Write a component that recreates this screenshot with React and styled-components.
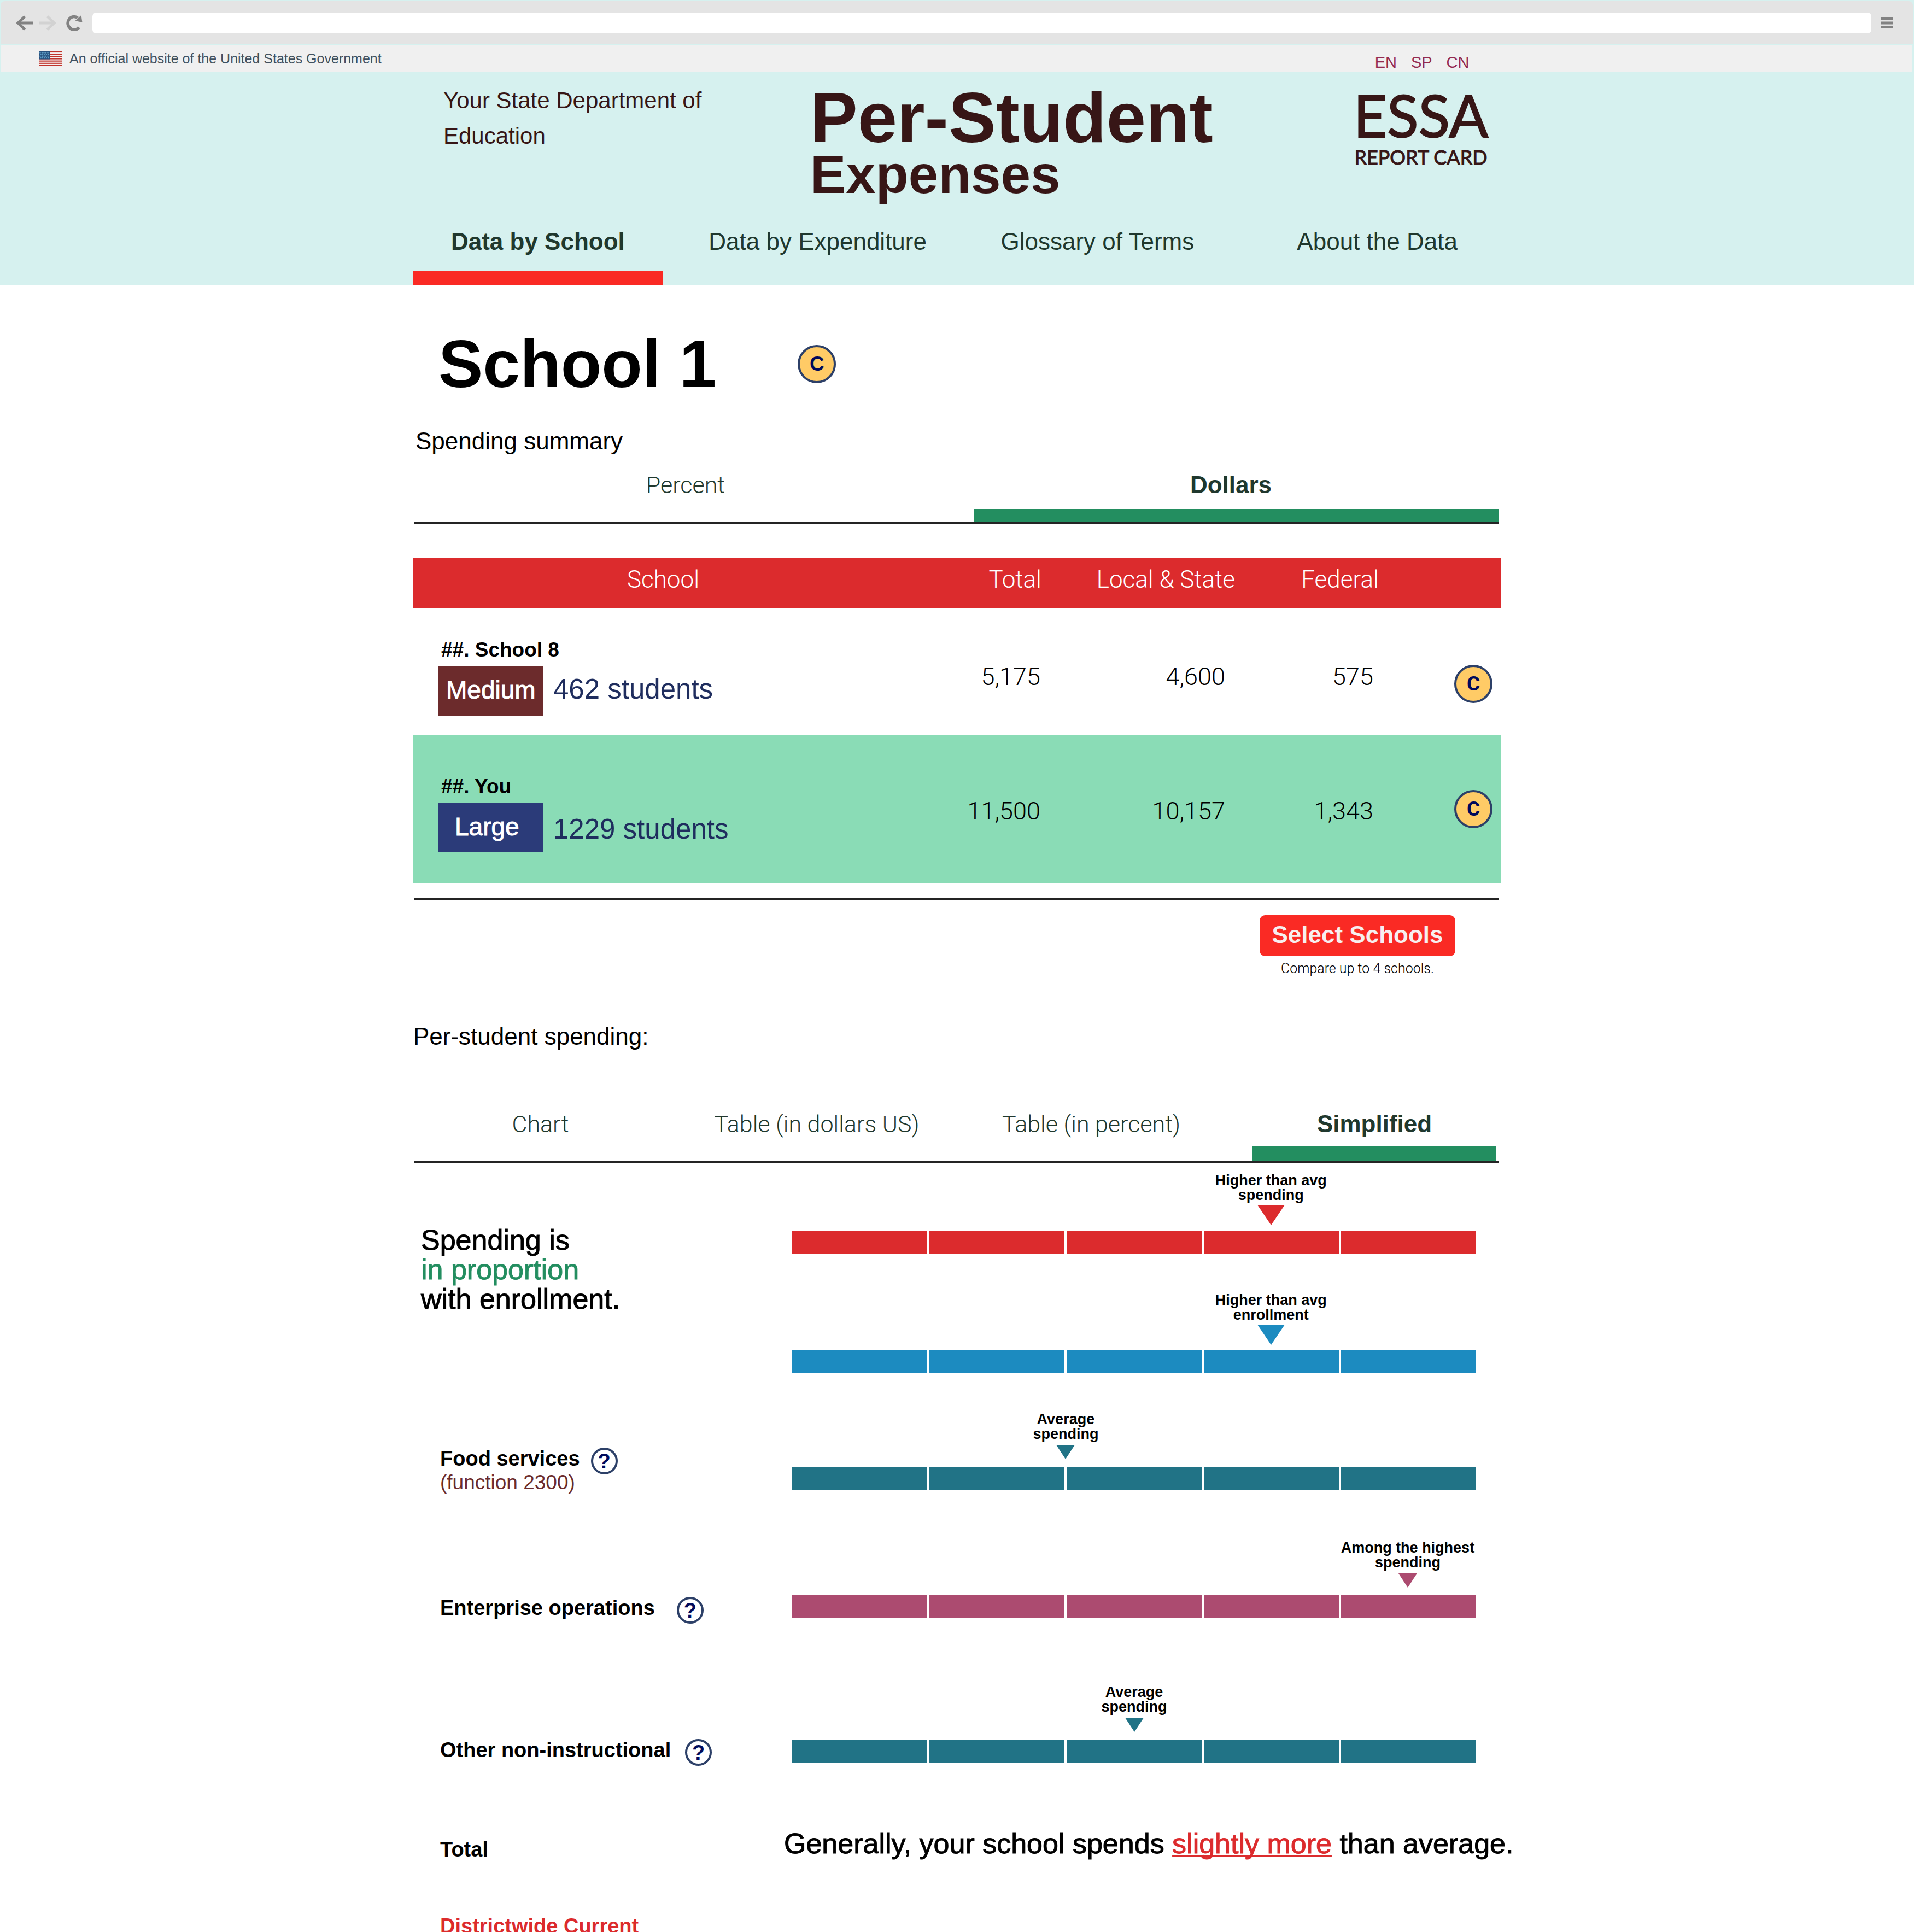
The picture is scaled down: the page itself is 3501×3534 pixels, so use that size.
import React from "react";
import styled, { createGlobalStyle } from "styled-components";

const color = {
  mint: "#d6f1ef",
  maroon: "#371616",
  forest: "#20382e",
  scarlet: "#fa2a24",
  red: "#dc2b2d",
  green: "#238e60",
  ink: "#242424",
  navy: "#2d4068",
  deepNavy: "#000a5c",
  blue: "#1c8bc0",
  teal: "#217386",
  plum: "#ac4b70",
};

const sans = `"Liberation Sans", Arial, Helvetica, sans-serif`;
const light = `Roboto, "Liberation Sans", sans-serif`;

const GlobalStyle = createGlobalStyle`
  *, *::before, *::after { box-sizing: border-box; }
  body { margin: 0; background: #fff; font-family: ${sans}; color: #000; }
  button, input { font: inherit; color: inherit; margin: 0; padding: 0; border: 0; background: none; }
  button { cursor: pointer; }
  a { color: inherit; text-decoration: none; }
  h1, h2, p { margin: 0; font-weight: 400; }
`;

const Page = styled.div`
  height: 100vh;
  overflow: hidden;
`;

const Container = styled.div`
  width: 100%;
  max-width: 1989px;
  margin: 0 auto;
`;

/* ---------- browser bar ---------- */

const Chrome = styled.div`
  padding: 2px 2px 2px 1px;
  background: ${color.mint};
`;

const ChromeBar = styled.div`
  display: flex;
  align-items: center;
  gap: 10px;
  height: 79px;
  padding: 0 37px 0 28px;
  border-radius: 8px 8px 0 0;
  background: #e4e4e4;
`;

const ChromeButton = styled.button`
  display: flex;
  color: ${(p) => (p.$muted ? "#d2d2d2" : "#828282")};
`;

const ReloadButton = styled(ChromeButton)`
  margin: 0 8px;
`;

const AddressField = styled.input`
  flex: 1;
  height: 38px;
  margin-right: 8px;
  padding: 0 16px;
  border-radius: 7px;
  background: #fff;
  font-size: 24px;
`;

/* ---------- government banner ---------- */

const Banner = styled.div`
  display: flex;
  align-items: center;
  height: 48px;
  margin: 0 3px 0 1px;
  padding-left: 70px;
  background: #f0f0f0;
`;

const BannerShell = styled.div`
  background: ${color.mint};
`;

const BannerText = styled.p`
  margin-left: 14px;
  font-size: 25px;
  line-height: 32px;
  color: #40505f;
`;

const Languages = styled.nav`
  display: flex;
  align-self: flex-end;
  gap: 26px;
  margin-left: auto;
  margin-right: calc(50vw - 940px);
  font-size: 29px;
  line-height: 34px;
  color: #942a50;
`;

/* ---------- header ---------- */

const Header = styled.header`
  padding-top: 20px;
  background: ${color.mint};
`;

const Masthead = styled(Container)`
  display: grid;
  grid-template-columns: 724fr 999fr 266fr;
  align-items: start;
  color: ${color.maroon};
`;

const Department = styled.p`
  max-width: 600px;
  padding-left: 55px;
  font-size: 42px;
  line-height: 65px;
`;

const SiteTitle = styled.p`
  display: flex;
  flex-direction: column;
  padding: 9px 0 0 2px;
  font-weight: 700;
`;

const TitleMain = styled.span`
  font-size: 130px;
  line-height: 110px;
`;

const TitleSub = styled.span`
  font-size: 98px;
  line-height: 98px;
`;

const Logo = styled.a`
  display: flex;
  flex-direction: column;
  align-items: center;
  gap: 10px;
  width: 240px;
  padding-top: 14px;
  font-family: Lato, "Open Sans", sans-serif;
`;

const LogoName = styled.span`
  font-size: 106px;
  line-height: 90px;
  -webkit-text-stroke: 2px currentColor;
`;

const LogoTag = styled.span`
  font-size: 36px;
  line-height: 44px;
  white-space: nowrap;
  -webkit-text-stroke: 1px currentColor;
`;

const MainNav = styled(Container).attrs({ as: "nav" })`
  display: grid;
  grid-template-columns: repeat(4, 1fr);
  gap: 56px;
  max-width: 1993px;
  padding: 46px 0 0 2px;
`;

const NavLink = styled.a`
  padding-bottom: 25px;
  border-bottom: 26px solid ${(p) => (p.$active ? color.scarlet : "transparent")};
  font-size: 44px;
  font-weight: ${(p) => (p.$active ? 700 : 400)};
  line-height: 56px;
  text-align: center;
  color: ${color.forest};
`;

/* ---------- shared pieces ---------- */

const Badge = styled.button`
  flex: none;
  width: 70px;
  height: 70px;
  border: 4px solid ${color.navy};
  border-radius: 50%;
  background: #ffcb66;
  font-size: 37px;
  font-weight: 700;
  line-height: 60px;
  text-align: center;
  color: ${color.deepNavy};
`;

const HelpButton = styled.button`
  flex: none;
  width: 49px;
  height: 49px;
  margin-top: 2px;
  border: 4px solid ${color.navy};
  border-radius: 50%;
  font-size: 38px;
  font-weight: 700;
  line-height: 40px;
  text-align: center;
  color: ${color.deepNavy};
`;

const Tabs = styled.div`
  display: grid;
  grid-template-columns: ${(p) => p.$columns};
  gap: ${(p) => p.$gap}px;
  margin-top: ${(p) => p.$space}px;
  padding-right: ${(p) => p.$end}px;
`;

const Tab = styled.button`
  padding: 0 ${(p) => p.$trim || 0}px ${(p) => 40 - p.$bar}px 0;
  border-bottom: ${(p) => p.$bar}px solid ${(p) => (p["aria-selected"] ? color.green : "transparent")};
  font-family: ${(p) => (p["aria-selected"] ? sans : light)};
  font-size: ${(p) => (p["aria-selected"] ? 44 : 43)}px;
  font-weight: ${(p) => (p["aria-selected"] ? 700 : 300)};
  line-height: 56px;
  text-align: center;
  white-space: nowrap;
  color: ${color.forest};
`;

const Rule = styled.hr`
  height: 4px;
  margin: ${(p) => p.$space || 0}px 4px 0 1px;
  border: 0;
  background: ${color.ink};
`;

const SectionTitle = styled.h2`
  margin-top: ${(p) => p.$space}px;
  padding-left: ${(p) => p.$indent || 0}px;
  font-size: 44px;
  line-height: 56px;
`;

/* ---------- school summary ---------- */

const SchoolHeading = styled.div`
  display: flex;
  align-items: center;
  gap: 149px;
  padding: 75px 0 0 46px;
`;

const SchoolName = styled.h1`
  font-size: 122px;
  font-weight: 700;
  line-height: 140px;
`;

const SpendingTable = styled.table`
  width: 100%;
  margin-top: 61px;
  border-collapse: collapse;
  table-layout: fixed;
  font-family: ${light};
  font-size: 44px;
  font-weight: 300;
  line-height: 56px;
`;

const Col = styled.col`
  width: ${(p) => (p.$width ? `${p.$width}px` : "auto")};
`;

const HeadCell = styled.th`
  padding: 12px 0 24px;
  background: ${color.red};
  font-weight: 300;
  text-align: ${(p) => p.$align || "right"};
  white-space: nowrap;
  color: #fff;
`;

const SchoolRow = styled.tr`
  height: ${(p) => p.$height}px;
  background: ${(p) => (p.$highlight ? "#8adcb6" : "transparent")};
  vertical-align: top;
`;

const Cell = styled.td`
  padding: ${(p) => p.$top}px ${(p) => p.$end || 0}px 0 ${(p) => p.$start || 0}px;
  font-size: 45px;
  text-align: right;
`;

const RowName = styled.p`
  padding-left: 5px;
  font-family: ${sans};
  font-size: 37px;
  font-weight: 700;
  line-height: 44px;
  text-align: left;
`;

const Enrollment = styled.div`
  display: flex;
  align-items: ${(p) => p.$align};
  gap: 18px;
  margin-top: 8px;
  font-family: ${sans};
  font-weight: 400;
`;

const SizeTag = styled.span`
  width: 192px;
  height: 90px;
  padding-left: ${(p) => p.$inset}px;
  background: ${(p) => p.$tone};
  font-size: 46px;
  line-height: 86px;
  text-align: left;
  -webkit-text-stroke: 1px currentColor;
  color: #fff;
`;

const StudentCount = styled.span`
  font-size: 51px;
  line-height: 84px;
  color: #1f2d5e;
`;

const Actions = styled.div`
  display: flex;
  flex-direction: column;
  align-items: center;
  width: 358px;
  margin: 27px 83px 0 auto;
`;

const SelectButton = styled.button`
  width: 100%;
  height: 75px;
  padding-bottom: 4px;
  border-radius: 10px;
  background: ${color.scarlet};
  font-size: 44px;
  font-weight: 700;
  line-height: 56px;
  color: #f7efef;
`;

const ActionNote = styled.p`
  margin-top: 5px;
  font-family: ${light};
  font-size: 25px;
  font-weight: 300;
  line-height: 36px;
`;

/* ---------- simplified view ---------- */

const Metric = styled.section`
  display: grid;
  grid-template-columns: minmax(0, 678fr) minmax(0, 1311fr);
  align-items: start;
  margin-top: ${(p) => p.$space}px;
`;

const Summary = styled.p`
  padding: 96px 0 0 14px;
  font-size: 52px;
  line-height: 54px;
  -webkit-text-stroke: 1px currentColor;
`;

const Line = styled.span`
  display: block;
  color: ${(p) => (p.$good ? color.green : "inherit")};
`;

const MetricLabel = styled.div`
  display: flex;
  align-items: flex-start;
  gap: ${(p) => p.$gap || 26}px;
  padding: ${(p) => p.$top}px 0 0 49px;
  font-size: 38px;
  line-height: 44px;
  white-space: nowrap;
`;

const MetricName = styled.p`
  font-size: 38px;
  font-weight: 700;
  color: ${(p) => (p.$alert ? color.red : "inherit")};
`;

const MetricCode = styled.p`
  font-size: 37px;
  color: #6c2b2b;
`;

const GaugeStack = styled.div`
  display: flex;
  flex-direction: column;
  gap: 71px;
  padding: 0 45px 0 15px;
`;

const Marker = styled.div`
  display: flex;
  flex-direction: column;
  align-items: center;
  width: 0;
  padding: 1px 0 ${(p) => (p.$large ? 10 : 14)}px;
  font-size: 27px;
  font-weight: 700;
  line-height: 27px;
  text-align: center;
  white-space: nowrap;
`;

const Pointer = styled.span`
  width: 0;
  border: solid transparent;
  border-width: ${(p) => (p.$large ? "37px 25px 0" : "26px 17px 0")};
  border-top-color: ${(p) => p.$tone};
  margin-top: ${(p) => (p.$large ? 4 : 6)}px;
`;

const Segments = styled.div`
  display: grid;
  grid-template-columns: repeat(5, 1fr);
  gap: 4px;
  height: 42px;
`;

const Segment = styled.span`
  background: ${(p) => p.$tone};
`;

const Verdict = styled.p`
  font-size: 52px;
  line-height: 60px;
  white-space: nowrap;
  -webkit-text-stroke: 1px currentColor;
`;

const VerdictLink = styled.a`
  color: ${color.red};
  text-decoration: underline;
  text-decoration-thickness: 3px;
  text-underline-offset: 4px;
  text-decoration-skip-ink: none;
`;

/* ---------- icons ---------- */

const ArrowIcon = ({ forward }) => (
  <svg width="32" height="28" viewBox="0 0 32 28" aria-hidden="true">
    <g transform={forward ? "matrix(-1 0 0 1 32 0)" : undefined} fill="none" stroke="currentColor" strokeWidth="5">
      <path d="M16.500 2 L4 14 L16.500 26" />
      <path d="M4 14 H32" />
    </g>
  </svg>
);

const ReloadIcon = () => (
  <svg width="30" height="30" viewBox="0 0 30 30" aria-hidden="true">
    <path d="M23.500 23 A11.500 12 0 1 1 21 5.500" fill="none" stroke="currentColor" strokeWidth="5.500" />
    <path d="M27.500 1 L29.500 14 L16.500 11 Z" fill="currentColor" />
  </svg>
);

const MenuIcon = () => (
  <svg width="21" height="20" viewBox="0 0 21 20" aria-hidden="true">
    <path d="M0 0 H21 V5 H0 Z M0 7.500 H21 V12.500 H0 Z M0 15 H21 V20 H0 Z" fill="currentColor" />
  </svg>
);

const FlagIcon = () => (
  <svg width="42" height="27" viewBox="0 0 42 26" preserveAspectRatio="none" role="img" aria-label="United States flag">
    <rect width="42" height="26" fill="#f5eeee" />
    {[0, 4, 8, 12, 16, 20, 24].map((y) => (
      <rect key={y} y={y} width="42" height="2" fill="#c0332b" />
    ))}
    <rect width="20" height="14" fill="#29527f" />
    {[2.5, 5.5, 8.5, 11.5].map((y, row) =>
      [2.5, 6, 9.5, 13, 16.5].map((x) => (
        <circle key={`${x}-${y}`} cx={x + (row % 2)} cy={y} r="1.2" fill="#5d9cc4" />
      ))
    )}
  </svg>
);

/* ---------- data ---------- */

const schools = [
  {
    name: "##. School 8", size: "Medium", tone: "#6c2b2c", inset: 14, students: "462 students",
    align: "flex-start", values: ["5,175", "4,600", "575"], height: 233, tops: [55, 98, 104],
  },
  {
    name: "##. You", size: "Large", tone: "#2b3b79", inset: 30, students: "1229 students",
    align: "flex-end", values: ["11,500", "10,157", "1,343"], height: 271, tops: [72, 111, 100], highlight: true,
  },
];

const valueEnds = [2, 18, 10];

const metrics = [
  { name: "Food services", code: "(function 2300)", top: 64, gap: 20, space: 70, tone: color.teal, at: 40, label: ["Average", "spending"] },
  { name: "Enterprise operations", top: 102, gap: 40, space: 83, tone: color.plum, at: 90, label: ["Among the highest", "spending"] },
  { name: "Other non-instructional", top: 98, space: 111, tone: color.teal, at: 50, label: ["Average", "spending"] },
];

const Gauge = ({ at, label, tone, large }) => (
  <div>
    <Marker $large={large} style={{ marginLeft: `${at}%` }}>
      {label.map((line) => (
        <span key={line}>{line}</span>
      ))}
      <Pointer $tone={tone} $large={large} />
    </Marker>
    <Segments>
      {[1, 2, 3, 4, 5].map((n) => (
        <Segment key={n} $tone={tone} />
      ))}
    </Segments>
  </div>
);

export default function App() {
  return (
    <Page>
      <GlobalStyle />
      <Chrome>
        <ChromeBar>
          <ChromeButton aria-label="Back"><ArrowIcon /></ChromeButton>
          <ChromeButton aria-label="Forward" $muted><ArrowIcon forward /></ChromeButton>
          <ReloadButton aria-label="Reload"><ReloadIcon /></ReloadButton>
          <AddressField type="text" aria-label="Address" />
          <ChromeButton aria-label="Menu"><MenuIcon /></ChromeButton>
        </ChromeBar>
      </Chrome>

      <BannerShell>
        <Banner>
          <FlagIcon />
          <BannerText>An official website of the United States Government</BannerText>
          <Languages aria-label="Language">
            <a href="#en">EN</a>
            <a href="#sp">SP</a>
            <a href="#cn">CN</a>
          </Languages>
        </Banner>
      </BannerShell>

      <Header>
        <Masthead>
          <Department>Your State Department of Education</Department>
          <SiteTitle>
            <TitleMain>Per-Student</TitleMain>
            <TitleSub>Expenses</TitleSub>
          </SiteTitle>
          <Logo href="#home">
            <LogoName>ESSA</LogoName>
            <LogoTag>REPORT CARD</LogoTag>
          </Logo>
        </Masthead>
        <MainNav aria-label="Main">
          <NavLink href="#school" $active aria-current="page">Data by School</NavLink>
          <NavLink href="#expenditure">Data by Expenditure</NavLink>
          <NavLink href="#glossary">Glossary of Terms</NavLink>
          <NavLink href="#about">About the Data</NavLink>
        </MainNav>
      </Header>

      <Container as="main">
        <SchoolHeading>
          <SchoolName>School 1</SchoolName>
          <Badge>C</Badge>
        </SchoolHeading>

        <SectionTitle $space={43} $indent={4}>Spending summary</SectionTitle>
        <Tabs role="tablist" $columns="996fr 959fr" $gap={30} $space={24} $end={4}>
          <Tab role="tab" aria-selected={false} $bar={24}>Percent</Tab>
          <Tab role="tab" aria-selected $bar={24} $trim={20}>Dollars</Tab>
        </Tabs>
        <Rule />

        <SpendingTable>
          <colgroup>
            <Col />
            <Col $width={235} />
            <Col $width={354} />
            <Col $width={263} />
            <Col $width={223} />
          </colgroup>
          <thead>
            <tr>
              <HeadCell $align="center">School</HeadCell>
              <HeadCell>Total</HeadCell>
              <HeadCell>Local &amp; State</HeadCell>
              <HeadCell>Federal</HeadCell>
              <HeadCell />
            </tr>
          </thead>
          <tbody>
            {schools.map((s) => (
              <SchoolRow key={s.name} $height={s.height} $highlight={s.highlight}>
                <Cell $top={s.tops[0]} $start={46}>
                  <RowName>{s.name}</RowName>
                  <Enrollment $align={s.align}>
                    <SizeTag $tone={s.tone} $inset={s.inset}>{s.size}</SizeTag>
                    <StudentCount>{s.students}</StudentCount>
                  </Enrollment>
                </Cell>
                {s.values.map((v, i) => (
                  <Cell key={v} $top={s.tops[1]} $end={valueEnds[i]}>{v}</Cell>
                ))}
                <Cell $top={s.tops[2]} $end={15}>
                  <Badge>C</Badge>
                </Cell>
              </SchoolRow>
            ))}
          </tbody>
        </SpendingTable>
        <Rule $space={27} />

        <Actions>
          <SelectButton>Select Schools</SelectButton>
          <ActionNote>Compare up to 4 schools.</ActionNote>
        </Actions>

        <SectionTitle $space={78}>Per-student spending:</SectionTitle>
        <Tabs role="tablist" $columns="465fr 414fr 458fr 446fr" $gap={66} $space={104} $end={8}>
          <Tab role="tab" aria-selected={false} $bar={28}>Chart</Tab>
          <Tab role="tab" aria-selected={false} $bar={28}>Table (in dollars US)</Tab>
          <Tab role="tab" aria-selected={false} $bar={28}>Table (in percent)</Tab>
          <Tab role="tab" aria-selected $bar={28}>Simplified</Tab>
        </Tabs>
        <Rule />

        <Metric $space={17}>
          <Summary>
            <Line>Spending is</Line>
            <Line $good>in proportion</Line>
            <Line>with enrollment.</Line>
          </Summary>
          <GaugeStack>
            <Gauge large at={70} tone={color.red} label={["Higher than avg", "spending"]} />
            <Gauge large at={70} tone={color.blue} label={["Higher than avg", "enrollment"]} />
          </GaugeStack>
        </Metric>

        {metrics.map((m) => (
          <Metric key={m.name} $space={m.space}>
            <MetricLabel $top={m.top} $gap={m.gap}>
              <div>
                <MetricName>{m.name}</MetricName>
                {m.code && <MetricCode>{m.code}</MetricCode>}
              </div>
              <HelpButton aria-label={`About ${m.name}`}>?</HelpButton>
            </MetricLabel>
            <GaugeStack>
              <Gauge at={m.at} tone={m.tone} label={m.label} />
            </GaugeStack>
          </Metric>
        ))}

        <Metric $space={112}>
          <MetricLabel $top={19}>
            <MetricName>Total</MetricName>
          </MetricLabel>
          <Verdict>
            Generally, your school spends <VerdictLink href="#compare">slightly more</VerdictLink> than average.
          </Verdict>
        </Metric>

        <Metric $space={96}>
          <MetricLabel $top={0}>
            <MetricName $alert>Districtwide Current</MetricName>
          </MetricLabel>
        </Metric>
      </Container>
    </Page>
  );
}
